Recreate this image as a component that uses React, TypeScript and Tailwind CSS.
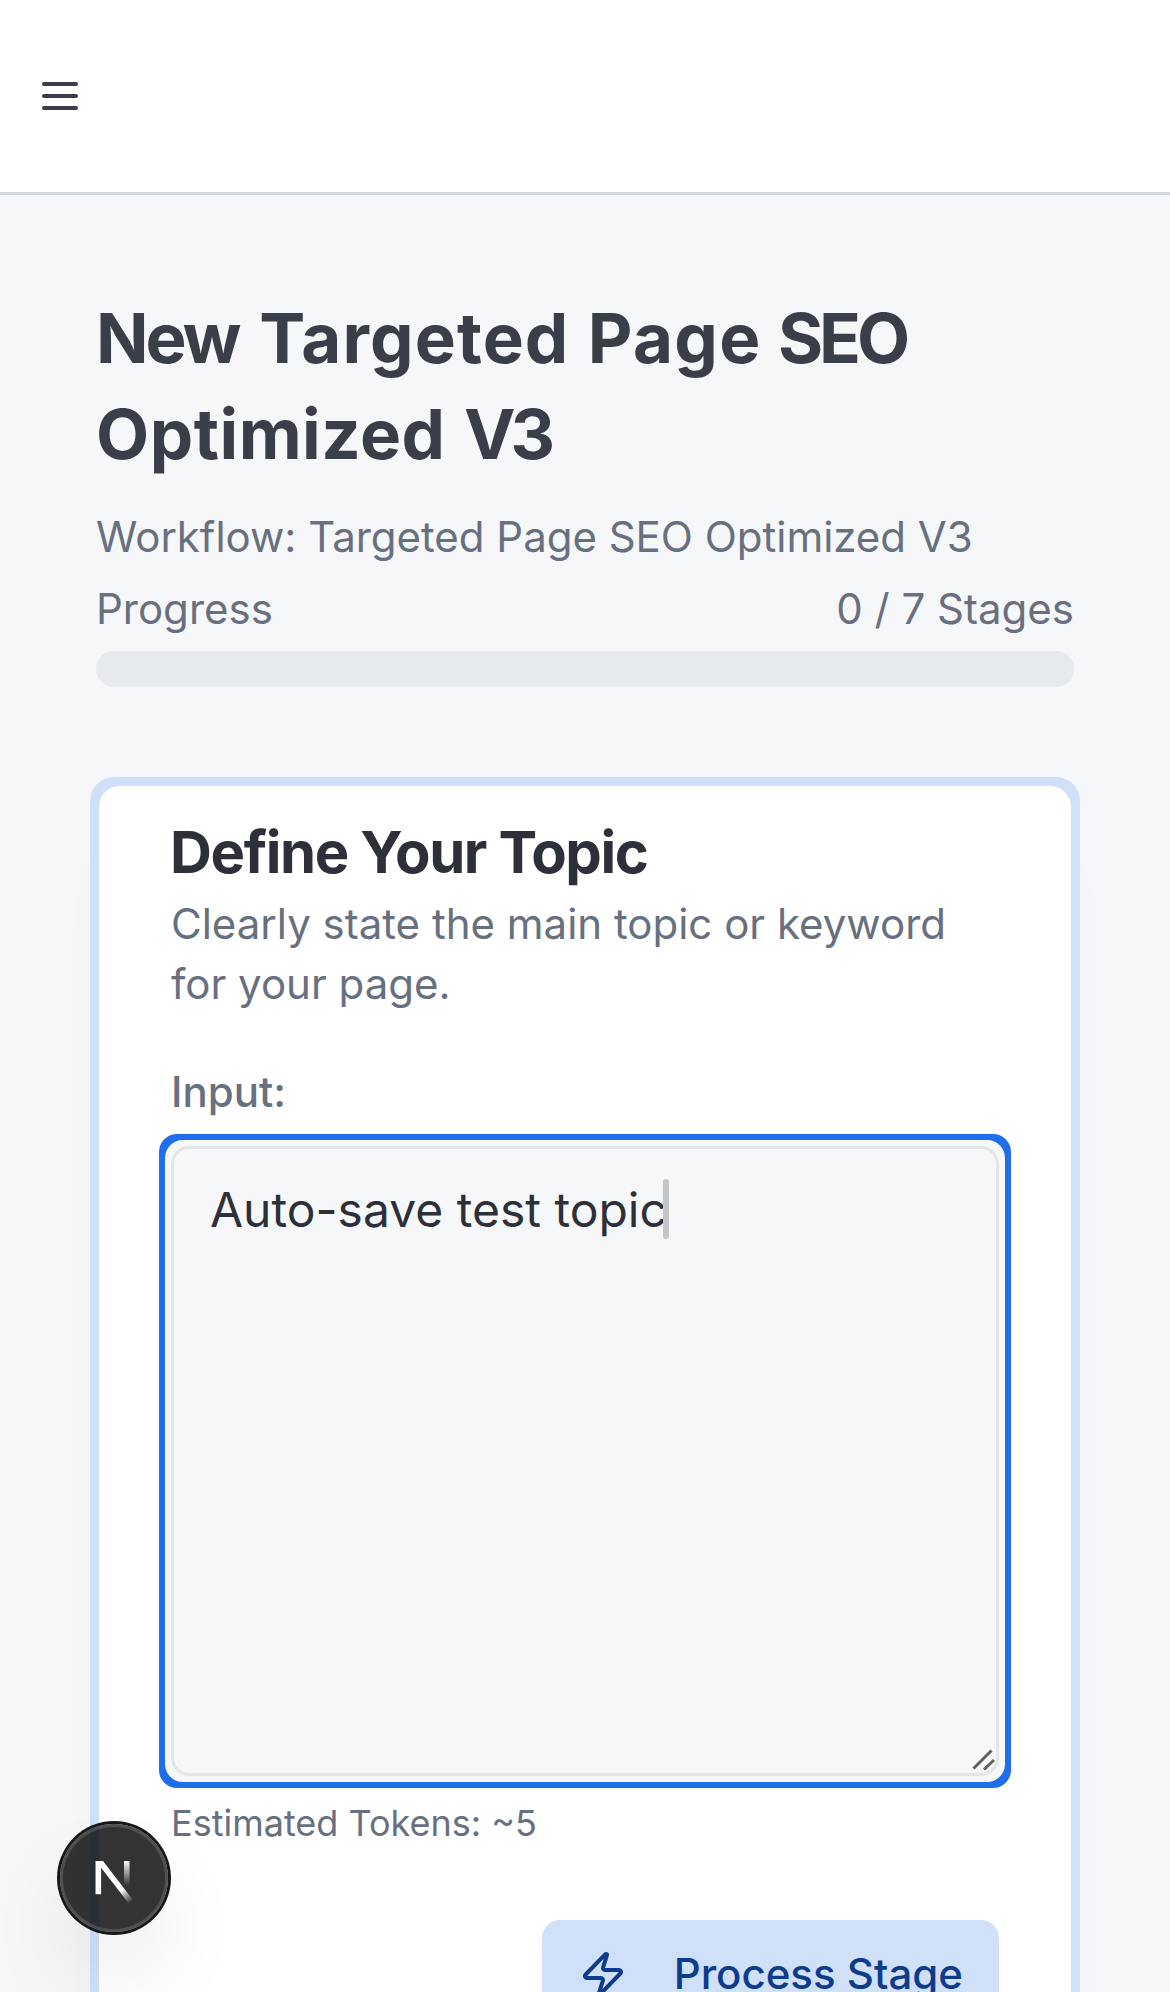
function MenuIcon() {
  return (
    <svg width="48" height="48" viewBox="0 0 24 24" fill="none" stroke="#3a3e48" strokeWidth="2" strokeLinecap="round">
      <path d="M4 6h16M4 12h16M4 18h16" />
    </svg>
  );
}

function ZapIcon() {
  return (
    <svg className="ml-px" width="48" height="48" viewBox="0 0 24 24" fill="none" stroke="currentColor" strokeWidth="2" strokeLinecap="round" strokeLinejoin="round">
      <path d="M4 14a1 1 0 0 1-.78-1.63l9.9-10.2a.5.5 0 0 1 .86.46l-1.92 6.02A1 1 0 0 0 13 10h7a1 1 0 0 1 .78 1.63l-9.9 10.2a.5.5 0 0 1-.86-.46l1.92-6.02A1 1 0 0 0 11 14z" />
    </svg>
  );
}

function NextBadge() {
  return (
    <div className="absolute left-[60px] top-[1824px] size-[108px] rounded-full bg-black/80 shadow-[0_0_0_3px_#171717,inset_0_0_0_3px_rgba(255,255,255,0.14),0_48px_96px_-24px_rgba(0,0,0,0.24)]">
      <svg width="108" height="108" viewBox="0 0 36 36" fill="none">
        <defs>
          <linearGradient id="diag" x1="9.95555" y1="11.1226" x2="15.4778" y2="17.9671" gradientUnits="userSpaceOnUse">
            <stop stopColor="white" />
            <stop offset="0.604072" stopColor="white" stopOpacity="0" />
            <stop offset="1" stopColor="white" stopOpacity="0" />
          </linearGradient>
          <linearGradient id="stem" x1="11.8222" y1="1.40039" x2="11.791" y2="9.62542" gradientUnits="userSpaceOnUse">
            <stop stopColor="white" />
            <stop offset="1" stopColor="white" stopOpacity="0" />
          </linearGradient>
          <clipPath id="topcut">
            <rect x="0" y="1.5" width="20" height="20" />
          </clipPath>
        </defs>
        <g transform="translate(10.43 10.83)">
          <path d="M13.3 15.2 2.34 1v11.6" stroke="url(#diag)" strokeWidth="1.86" clipPath="url(#topcut)" />
          <path d="M11.825 1.5v11.6" stroke="url(#stem)" strokeWidth="1.86" />
        </g>
      </svg>
    </div>
  );
}

export default function App() {
  return (
    <div className="relative h-[1992px] w-[1170px] overflow-hidden bg-[#f6f7f9] font-['Inter',sans-serif] text-[42px] leading-[60px] text-[#687080]">
      <header className="h-[195px] border-b-[3px] border-[#d3d8de] bg-white px-9 pt-[72px]">
        <MenuIcon />
      </header>

      <main className="px-24 pt-[95px]">
        <h1 className="whitespace-nowrap text-[69px] font-bold leading-[96px] text-[#3a3e48]">
          <span className="tracking-[-3px]">New</span>
          <span className="tracking-[4.5px]"> </span>
          <span className="tracking-[1.1px]">Targeted</span>
          <span className="tracking-[2px]"> </span>
          <span className="tracking-[1.3px]">Page</span>
          <span className="tracking-[0px]"> </span>
          <span className="tracking-[-4px]">SEO</span>
          <br />
          <span className="tracking-[0.5px]">Optimized</span>
          <span className="tracking-[2px]"> </span>
          <span className="tracking-[-5px]">V3</span>
        </h1>
        <p className="mt-[25px] tracking-[-0.02px]">Workflow: Targeted Page SEO Optimized V3</p>
        <div className="mt-3 flex justify-between">
          <span>Progress</span>
          <span>0 / 7 Stages</span>
        </div>
        <div className="mt-3 h-9 rounded-full bg-[#e6e9ee]" />

        <section className="-mx-1.5 mt-[90px] rounded-3xl bg-[#d1e0f9] p-[9px] shadow-[0_60px_75px_-15px_rgba(20,20,60,0.02)]">
          <div className="h-[1400px] rounded-[21px] bg-white px-[72px] pt-9">
            <h2 className="-ml-px text-[58px] font-bold tracking-[-1.4px] text-[#2d3038]">Define Your Topic</h2>
            <p className="mt-3">Clearly state the main topic or keyword for your page.</p>
            <p className="mt-12 font-medium">Input:</p>
            <div className="-mx-3 mt-3 rounded-[18px] bg-[#216eec] p-1.5">
              <div className="rounded-[18px] bg-[#f6f7f9] p-1.5">
                <div className="relative h-[630px] rounded-[18px] border-[3px] border-[#e4e5e7] px-9 pt-[25px] text-5xl leading-[72px] text-[#2d3038]">
                  Auto-save test topic
                  <span className="absolute left-[489px] top-[30px] h-[60px] w-1.5 rounded-full bg-[#c4c5c7]" />
                  <svg className="absolute bottom-0 right-0" width="30" height="30" viewBox="0 0 30 30" stroke="#606060" strokeWidth="3">
                    <path d="M7.5 25.5 25.5 7.5M18 26.5l10-9.5" />
                  </svg>
                </div>
              </div>
            </div>
            <p className="mt-[11px] text-4xl leading-[48px]">Estimated Tokens: ~5</p>
            <div className="mt-[73px] flex justify-end">
              <button className="flex h-[108px] items-center gap-[47px] rounded-[18px] bg-[#d1e0f9] px-9 font-medium text-[#0d3c8c]">
                <ZapIcon />
                <span>Process Stage</span>
              </button>
            </div>
          </div>
        </section>
      </main>

      <NextBadge />
    </div>
  );
}
